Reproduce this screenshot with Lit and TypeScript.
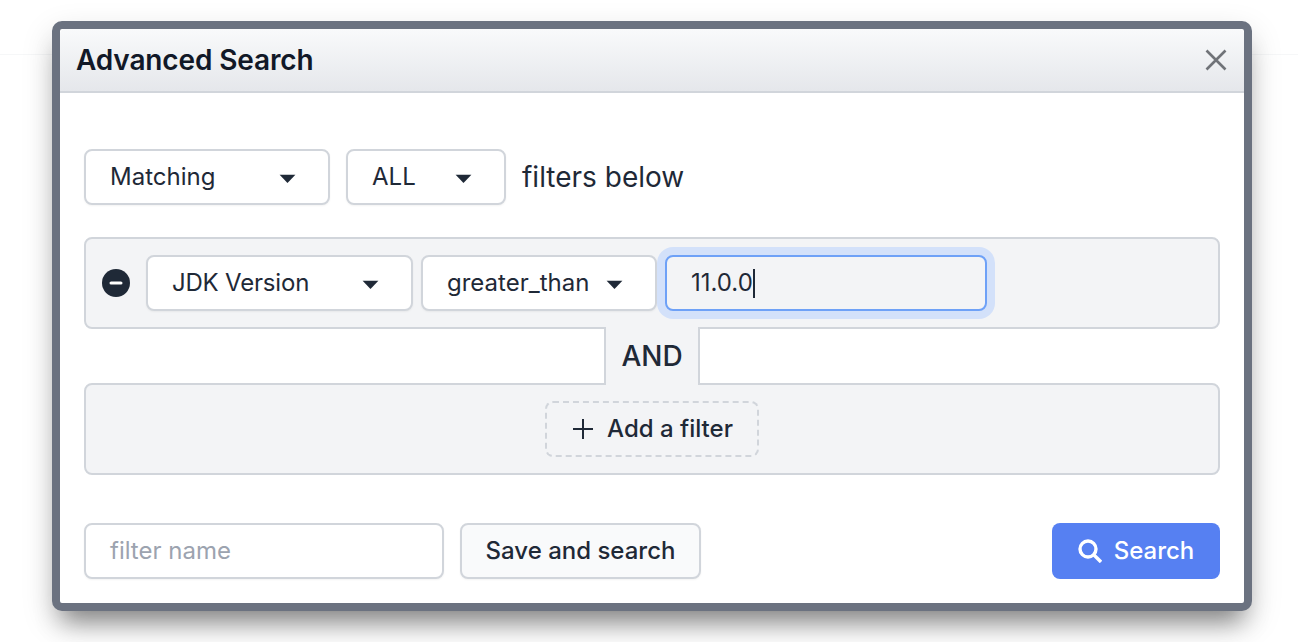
import { LitElement, html, css, svg } from "lit";
import { customElement } from "lit/decorators.js";

const caret = svg`<svg class="caret" width="18" height="12" viewBox="0 0 18 12"><path d="M1.6 2.8h15.8L9.5 11z" fill="#1f2937"/></svg>`;

@customElement("app-root")
export class AppRoot extends LitElement {
  static styles = css`
    :host { display: block; position: relative; height: 642px; overflow: hidden; background: #fff;
      font-family: Inter, "Noto Sans", sans-serif; color: #1f2937; font-size: 24px; line-height: 32px; }
    * { box-sizing: border-box; }
    .topbar { height: 55px; border-bottom: 1px solid #f6f7f8; background: #fff; }
    .modal { position: absolute; left: 52px; top: 21px; width: 1200px; height: 590px; border: 8px solid #6b7280;
      border-radius: 10px; background: #fff; display: flex; flex-direction: column;
      box-shadow: 0 20px 24px -10px rgba(0,0,0,.42), 0 12px 32px rgba(0,0,0,.15); background-clip: padding-box; }
    .inner { flex: 1; display: flex; flex-direction: column; border-radius: 5px; overflow: hidden; background: #fff; }
    .head { height: 64px; flex: none; display: flex; align-items: center; justify-content: space-between;
      padding: 0 16px 0 16px; background: linear-gradient(#f9fafb, #e5e7eb); border-bottom: 2px solid #d1d5db; }
    .title { font-size: 28px; font-weight: 600; color: #111827; line-height: 32px; letter-spacing: -0.14px; }
    .close { display: block; }
    .body { flex: 1; display: flex; flex-direction: column; padding: 56px 24px 24px; }
    .row { display: flex; align-items: center; gap: 16px; }
    .big { font-size: 28px; }
    .select { height: 56px; flex: none; display: flex; align-items: center; justify-content: space-between;
      border: 2px solid #d1d5db; border-radius: 8px; background: #fff; padding: 0 32px 0 24px;
      box-shadow: 0 1px 2px rgba(0,0,0,.05); }
    .w246 { width: 246px; } .w160 { width: 160px; } .w267 { width: 267px; } .w236 { width: 236px; }
    .tight { letter-spacing: -0.2px; }
    .caret { display: block; margin-top: 2px; flex: none; }
    .group { margin-top: 32px; }
    .box { height: 92px; border: 2px solid #d1d5db; border-radius: 8px; background: #f3f4f6; display: flex; align-items: center; }
    .filter { padding: 0 16px; }
    .minus { flex: none; width: 28px; height: 28px; margin-right: 16px; display: block; }
    .filter .w236 { margin-left: 8px; }
    .value { margin-left: 8px; width: 322px; height: 56px; border: 2px solid #6ea1f7; border-radius: 8px; background: #f3f4f6;
      box-shadow: 0 0 0 8px #d3e1fa; display: flex; align-items: center; padding: 0 24px; }
    .cursor { display: inline-block; width: 2px; height: 29px; background: #1f2937; }
    .connector { height: 54px; display: flex; justify-content: center; }
    .and { width: 96px; margin: -2px 0; position: relative; background: #f3f4f6; border: solid #d1d5db; border-width: 0 2px;
      display: flex; align-items: center; justify-content: center; font-weight: 500; font-size: 28px; }
    .add-box { justify-content: center; }
    .add { width: 214px; height: 56px; border: 2px dashed #d1d5db; border-radius: 8px; display: flex; align-items: center;
      justify-content: center; gap: 13px; font-weight: 500; padding-left: 1px; }
    .foot { margin-top: auto; justify-content: space-between; }
    .left { display: flex; gap: 16px; }
    .name { width: 360px; height: 56px; border: 2px solid #d1d5db; border-radius: 8px; padding: 0 24px; display: flex;
      align-items: center; color: #9ca3af; background: #fff; box-shadow: 0 1px 2px rgba(0,0,0,.05); }
    .save { width: 241px; height: 56px; border: 2px solid #d1d5db; border-radius: 8px; background: #f9fafb; display: flex;
      align-items: center; justify-content: center; font-weight: 500; box-shadow: 0 1px 2px rgba(0,0,0,.05); }
    .search { width: 168px; height: 56px; border-radius: 8px; background: #5680f2; color: #fff; display: flex; align-items: center;
      justify-content: center; gap: 12px; font-weight: 500; }
  `;

  render() {
    return html`
      <div class="topbar"></div>
      <div class="modal">
        <div class="inner">
          <div class="head">
            <div class="title">Advanced Search</div>
            <svg class="close" width="24" height="24" viewBox="0 0 24 24"><path d="M2.5 2.5L21.5 21.5M21.5 2.5L2.5 21.5" stroke="#707378" stroke-width="2.6" fill="none"/></svg>
          </div>
          <div class="body">
            <div class="row">
              <div class="select w246"><span>Matching</span>${caret}</div>
              <div class="select w160"><span>ALL</span>${caret}</div>
              <span class="big">filters below</span>
            </div>
            <div class="group">
              <div class="box filter">
                <svg class="minus" viewBox="0 0 28 28"><circle cx="14" cy="14" r="14" fill="#1f2937"/><rect x="7.5" y="12.4" width="13" height="3.2" rx="1.6" fill="#fff"/></svg>
                <div class="select w267"><span class="tight">JDK Version</span>${caret}</div>
                <div class="select w236"><span>greater_than</span>${caret}</div>
                <div class="value"><span>11.0.0</span><span class="cursor"></span></div>
              </div>
              <div class="connector"><div class="and">AND</div></div>
              <div class="box add-box">
                <div class="add">
                  <svg width="22" height="22" viewBox="0 0 22 22"><path d="M11 1V21M1 11H21" stroke="#1f2937" stroke-width="2" fill="none"/></svg>
                  <span>Add a filter</span>
                </div>
              </div>
            </div>
            <div class="row foot">
              <div class="left">
                <div class="name">filter name</div>
                <div class="save">Save and search</div>
              </div>
              <div class="search">
                <svg width="24" height="24" viewBox="0 0 24 24"><circle cx="10" cy="10" r="8" stroke="#fff" stroke-width="3.4" fill="none"/><path d="M16 16L23 23" stroke="#fff" stroke-width="3.4" fill="none"/></svg>
                <span>Search</span>
              </div>
            </div>
          </div>
        </div>
      </div>`;
  }
}
